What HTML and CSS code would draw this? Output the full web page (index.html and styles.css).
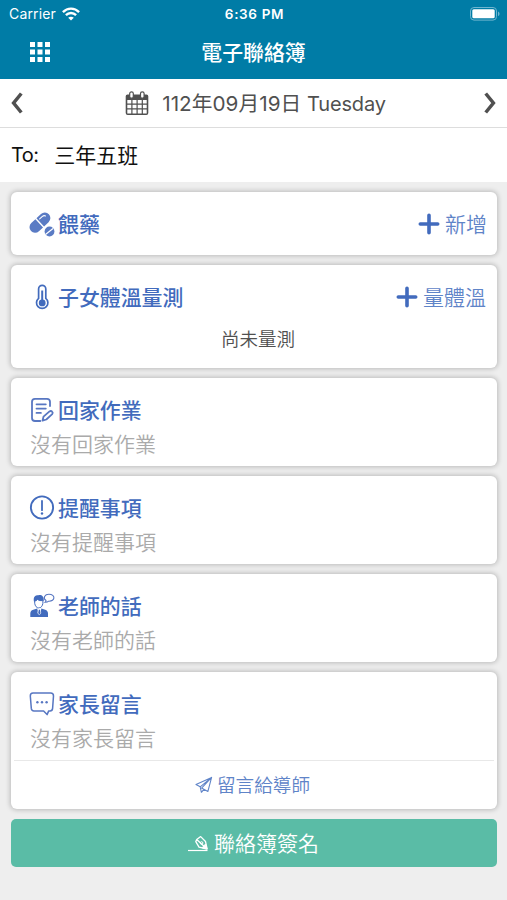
FILE: index.html
```html
<!DOCTYPE html>
<html lang="zh-Hant">
<head>
<meta charset="utf-8">
<meta name="viewport" content="width=device-width, initial-scale=1">
<title>電子聯絡簿</title>
<link rel="stylesheet" href="styles.css">
</head>
<body>
<header class="top">
  <div class="status">
    <div class="carrier"><span>Carrier</span>
      <svg width="18" height="14" viewBox="0 0 18 14" fill="none" stroke="#fff" stroke-width="2.4"><path d="M.9 5.1C5.5.5 12.500.5 17.100 5.100M3.900 8.200c2.900-2.900 7.300-2.900 10.200 0"/><path d="M9 13.600 6.200 10.800c1.600-1.500 4-1.500 5.600 0z" fill="#fff" stroke="none"/></svg>
    </div>
    <div class="clock">6:36 PM</div>
    <svg class="battery" width="30" height="14" viewBox="0 0 30 14"><rect x=".5" y=".5" width="26" height="12.600" rx="3.500" fill="none" stroke="#6fb5cf"/><rect x="2.300" y="2.300" width="22.400" height="9" rx="1.500" fill="#fff"/><path d="M28 4.500c2 .8 2 3.800 0 4.600z" fill="#6fb5cf"/></svg>
  </div>
  <div class="nav">
    <svg class="menu" width="20" height="20" viewBox="0 0 20 20" fill="#fff"><path d="M0 0h5v5H0zM7.500 0h5v5h-5zM15 0h5v5h-5zM0 7.500h5v5H0zM7.500 7.500h5v5h-5zM15 7.500h5v5h-5zM0 15h5v5H0zM7.500 15h5v5h-5zM15 15h5v5h-5z"/></svg>
    <h1>電子聯絡簿</h1>
  </div>
</header>

<div class="date-bar">
  <svg width="12" height="22" viewBox="0 0 12 22" fill="none" stroke="#505050" stroke-width="3.500"><path d="M10.300 1.500 2.600 11l7.700 9.500"/></svg>
  <div class="date">
    <svg width="24" height="25" viewBox="0 0 24 25"><path d="M2.500 3.500h19q1.800 0 1.800 1.800V22q0 2-2 2H2.700q-2 0-2-2V5.300q0-1.800 1.800-1.800z" fill="#505050"/><path d="M2.300 9h4v3.500h-4zM7.500 9h4v3.500h-4zM12.700 9h4v3.500h-4zM17.900 9h3.800v3.500h-3.800zM2.300 13.700h4v3.600h-4zM7.500 13.700h4v3.600h-4zM12.700 13.700h4v3.600h-4zM17.900 13.700h3.800v3.600h-3.800zM2.300 18.500h4v4h-4zM7.500 18.500h4v4h-4zM12.700 18.500h4v4h-4zM17.900 18.500h3.800v4h-3.800z" fill="#fff"/><g fill="#fff" stroke="#505050" stroke-width="1.200"><rect x="4.700" y=".8" width="3.600" height="6.400" rx="1.800"/><rect x="15.500" y=".8" width="3.600" height="6.400" rx="1.800"/></g></svg>
    <p class="date-text"><span class="day">112年09月19日</span> <span class="weekday">Tuesday</span></p>
  </div>
  <svg width="12" height="22" viewBox="0 0 12 22" fill="none" stroke="#505050" stroke-width="3.500"><path d="m1.700 1.500 7.700 9.500-7.700 9.500"/></svg>
</div>
<div class="to-bar"><span class="to">To:</span><span class="class-name">三年五班</span></div>

<main>
  <section class="card medicine">
    <div class="row">
      <svg class="icon" width="26" height="26" viewBox="0 0 26 26"><g transform="rotate(-43 11 12)" fill="#5a7bc4"><path d="M10.200 6.100v11.200H4.600a5.600 5.600 0 0 1 0-11.200zM11.600 6.100h6.200a5.600 5.600 0 0 1 0 11.200h-6.200z"/><path d="M13.500 8.800h3.800q2 .1 2.500 1.800" fill="none" stroke="#fff" stroke-width="1.100" stroke-linecap="round"/></g><circle cx="20.500" cy="20.500" r="5.700" fill="#fff"/><circle cx="20.500" cy="20.500" r="4.900" fill="#5a7bc4"/><path d="m16.500 23.400 7.500-6" stroke="#fff" stroke-width="1.300"/></svg>
      <h2>餵藥</h2>
      <a class="action"><svg width="22" height="22" viewBox="0 0 22 22" stroke="#426bbd" stroke-width="3.600" stroke-linecap="round"><path d="M11 2.300v17.400M2.300 11h17.400"/></svg><span>新增</span></a>
    </div>
  </section>
  <section class="card temperature">
    <div class="row">
      <svg class="icon" width="26" height="26" viewBox="0 0 26 26" fill="none" stroke="#426bbd"><path d="M9.600 14.300V5a3.600 3.600 0 0 1 7.200 0v9.300a5.700 5.700 0 1 1-7.200 0z" stroke-width="1.700"/><path d="M13.200 6.500v12" stroke-width="2"/><circle cx="13.200" cy="18.900" r="3.400" fill="#426bbd" stroke="none"/></svg>
      <h2>子女體溫量測</h2>
      <a class="action"><svg width="22" height="22" viewBox="0 0 22 22" stroke="#426bbd" stroke-width="3.600" stroke-linecap="round"><path d="M11 2.300v17.400M2.300 11h17.400"/></svg><span>量體溫</span></a>
    </div>
    <p class="reading">尚未量測</p>
  </section>
  <section class="card note">
    <div class="row">
      <svg class="icon" width="26" height="26" viewBox="0 0 26 26" fill="none" stroke="#5877c2" stroke-width="1.800" stroke-linecap="round" stroke-linejoin="round"><path d="M21 9V4.800q0-3-3-3H6q-3 0-3 3V21q0 3 3 3h5.300M7.500 7.300h9.300M7.500 11.600h9.300M7.500 15.900h4.400M13.500 23.700l1-4 6-5.300q1.500-1 2.600.2 1.200 1.200.1 2.600l-5.900 5.300z"/></svg>
      <h2>回家作業</h2>
    </div>
    <p>沒有回家作業</p>
  </section>
  <section class="card note">
    <div class="row">
      <svg class="icon" width="26" height="26" viewBox="0 0 26 26" fill="none" stroke="#426bbd"><circle cx="13" cy="12.500" r="11.100" stroke-width="1.900"/><path d="M13 6v9.200" stroke-width="1.800" stroke-linecap="round"/><circle cx="13" cy="18.500" r="1.200" fill="#426bbd" stroke="none"/></svg>
      <h2>提醒事項</h2>
    </div>
    <p>沒有提醒事項</p>
  </section>
  <section class="card note">
    <div class="row">
      <svg class="icon" width="26" height="26" viewBox="0 0 26 26"><path d="M1.300 23.900v-3.300q0-3 3-3.800l3.900-1.300 2.100 6 2.100-6 3.800 1.300q2.800.9 2.800 3.800v3.300zM5 8.800C4 3.800 6 2.200 9.300 2.200c2.600-.9 6.100.6 5.400 5.900z" fill="#426bbd"/><path d="M5.700 8v2.300c.4 2.800 2 4.700 4.100 4.700s3.700-1.900 4.100-4.700V7.600q-3.800.5-5.400-1.200-1 1.600-2.800 1.600z" fill="#fff" stroke="#426bbd"/><path d="m9 16.300 1.300-1.200 1.400 1.200.5 3.700-1.900 2.300L8.400 20z" fill="#fff"/><path d="m9.800 16.800-.6 3.300 1.200 1.600 1.100-1.600-.5-3.300z" fill="#426bbd"/><path d="M16.200 9.300q.8-.6.8-1.800c-3.500-2.700-1.200-6.200 2.900-6.200 6.900 0 6.500 7.300-.3 6.900q-1.200 1.200-3.400 1.100z" fill="#fff" stroke="#5877c2" stroke-width="1.100"/></svg>
      <h2>老師的話</h2>
    </div>
    <p>沒有老師的話</p>
  </section>
  <section class="card message">
    <div class="row">
      <svg class="icon" width="26" height="26" viewBox="0 0 26 26"><path d="M4 2.100h17.700q2.800 0 2.800 2.800l-.9 12.500q-.2 2.500-2.500 2.500h-1.400l-1.600 3.700-3.500-3.700H4.900q-2.300 0-2.600-2.500L1.300 4.900q0-2.700 2.700-2.800z" fill="none" stroke="#5877c2" stroke-width="1.500" stroke-linejoin="round"/><g fill="#5877c2"><circle cx="8.400" cy="11.300" r="1.200"/><circle cx="13" cy="11.300" r="1.200"/><circle cx="17.600" cy="11.300" r="1.200"/></g></svg>
      <h2>家長留言</h2>
    </div>
    <p>沒有家長留言</p>
    <a class="reply"><svg width="18" height="18" viewBox="0 0 18 18" fill="none" stroke="#5f84c8" stroke-width="1.100" stroke-linejoin="round"><path d="M16.600 1.400 1 8.500l4.200 2.300L16.600 1.400 6.600 12.100l6.300 3.300zM5.200 10.800l1.200 5.500 2.500-2.900"/></svg><span>留言給導師</span></a>
  </section>
  <button class="sign"><svg width="20" height="18" viewBox="0 0 20 18" fill="none" stroke="#fff" stroke-linejoin="round"><path d="M0 15.500h19.500" stroke-width="1.200"/><path d="m8.700 4.600 4-3 4.800 4.900 1.600 7.500-8.100-1.900-3.200-5.500zM8.700 4.600l7.600 7M12.700 1.600l-4 3" stroke-width="1.300"/><circle cx="13.600" cy="8" r="1.300"/><path d="m17.500 9 1.600 5-5-1.200z" fill="#fff"/></svg><span>聯絡簿簽名</span></button>
</main>
</body>
</html>
```
FILE: styles.css
```css
* { box-sizing: border-box; }
body {
  margin: 0;
  min-height: 900px;
  background: #eee;
  color: #505050;
  font-family: Inter, "Noto Sans CJK TC", sans-serif;
}
h1, h2, p { margin: 0; }
svg { display: block; flex: none; }

.top { height: 79px; background: #007ca6; color: #fff; }
.status {
  display: grid;
  grid-template-columns: 1fr auto 1fr;
  align-items: center;
  height: 27px;
  padding: 0 7px 0 9px;
  font-size: 13.500px;
}
.carrier { display: flex; align-items: center; gap: 6px; font-size: 14px; }
.carrier span { letter-spacing: .15px; }
.clock { font-weight: 600; letter-spacing: .65px; }
.battery { justify-self: end; }
.nav {
  display: grid;
  grid-template-columns: 60px 1fr 60px;
  align-items: center;
  height: 50px;
}
.menu { margin-left: 30px; }
h1 { padding-top: 1px; font-size: 20.900px; font-weight: 500; line-height: 30px; text-align: center; }

.date-bar {
  display: flex;
  align-items: center;
  justify-content: space-between;
  height: 49px;
  padding: 0 11px;
  background: #fff;
  border-bottom: 1px solid #ddd;
}
.date { display: flex; align-items: center; gap: 13px; padding-left: 4px; line-height: 30px; }
.date-text { padding-top: 2px; font-size: 20px; white-space: nowrap; }
.day { font-size: 20.700px; letter-spacing: .05px; font-weight: 370; }
.weekday { font-size: 20px; letter-spacing: -.15px; }
.to-bar {
  display: flex;
  align-items: center;
  gap: 16px;
  height: 54px;
  padding: 0 11px;
  background: #fff;
  color: #111;
  font-size: 21px;
}
.to { font-size: 20px; letter-spacing: -.6px; }
.class-name { margin-top: -2px; }

main { display: flex; flex-direction: column; gap: 10px; padding: 10px 10px 0 11px; }
.card {
  padding: 16px 11px 0 18px;
  background: #fff;
  border-radius: 6px;
  box-shadow: 0 0 5px 1px rgba(0, 0, 0, .22);
}
.row { display: flex; align-items: center; height: 32px; color: #426bbd; }
.icon { margin-right: 3px; }
h2 { padding-top: 1px; font-size: 20.900px; font-weight: 500; line-height: 32px; }
.action { display: flex; align-items: center; gap: 5px; margin-left: auto; font-size: 21px; line-height: 32px; color: #5f84c8; font-weight: 350; }
.action span { padding-top: 1px; }
.medicine .action { margin-right: -1px; }
.card p { font-size: 21px; line-height: 32px; padding-left: 1px; color: #aaa; font-weight: 350; }
.medicine { height: 63px; }
.temperature { height: 103px; }
.card .reading { padding: 10px 0 0; margin-left: 1px; text-align: center; font-size: 18.500px; line-height: 32px; color: #505050; }
.note { height: 88px; }
.message { height: 137px; }
.note p, .message p { padding-top: 3px; }
.reply {
  display: flex;
  align-items: center;
  justify-content: center;
  gap: 4px;
  height: 47px;
  margin: 5px -8px 0 -15px;
  padding-right: 3px;
  border-top: 1px solid #e8e8e8;
  font-size: 18.600px;
  font-weight: 350;
  color: #5f84c8;
}
.reply svg { margin-top: 1px; }
.reply span { margin-top: -1px; }
.sign {
  display: flex;
  align-items: center;
  justify-content: center;
  gap: 6px;
  height: 48px;
  padding: 2px 1px 0 0;
  border: 0;
  border-radius: 5px;
  background: #5abca6;
  color: #fff;
  font: 350 21px/30px Inter, "Noto Sans CJK TC", sans-serif;
}
```
